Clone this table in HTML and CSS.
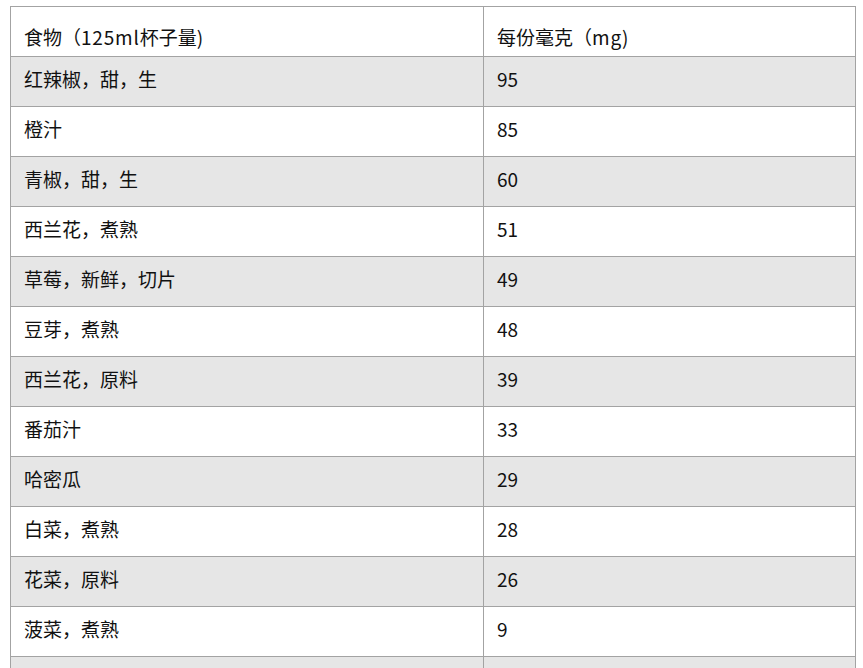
FILE: index.html
```html
<!DOCTYPE html>
<html lang="zh">
<head>
<meta charset="utf-8">
<link rel="stylesheet" href="styles.css">
</head>
<body>
<table class="vc-table">
  <colgroup><col class="c1"><col class="c2"></colgroup>
  <tr class="head"><td>食物（<span class="lat">125ml</span>杯子量)</td><td>每份毫克（<span class="lat">mg</span>)</td></tr>
  <tr class="alt"><td>红辣椒，甜，生</td><td>95</td></tr>
  <tr><td>橙汁</td><td>85</td></tr>
  <tr class="alt"><td>青椒，甜，生</td><td>60</td></tr>
  <tr><td>西兰花，煮熟</td><td>51</td></tr>
  <tr class="alt"><td>草莓，新鲜，切片</td><td>49</td></tr>
  <tr><td>豆芽，煮熟</td><td>48</td></tr>
  <tr class="alt"><td>西兰花，原料</td><td>39</td></tr>
  <tr><td>番茄汁</td><td>33</td></tr>
  <tr class="alt"><td>哈密瓜</td><td>29</td></tr>
  <tr><td>白菜，煮熟</td><td>28</td></tr>
  <tr class="alt"><td>花菜，原料</td><td>26</td></tr>
  <tr><td>菠菜，煮熟</td><td>9</td></tr>
  <tr class="alt"><td>&nbsp;</td><td>&nbsp;</td></tr>
</table>
</body>
</html>
```
FILE: styles.css
```css
html, body {
  margin: 0;
  padding: 0;
  background: #fff;
}
body {
  padding: 6px 0 0 10px;
}
.vc-table {
  border-collapse: collapse;
  width: 846px;
  table-layout: fixed;
  font-family: "Noto Sans CJK SC", "Noto Sans", sans-serif;
  font-size: 19px;
  color: #111;
}
.c1 { width: 473px; }
.vc-table td {
  border: 1px solid #a3a3a3;
  height: 49px;
  box-sizing: border-box;
  padding: 0 13px 5px 13px;
  line-height: 24px;
  vertical-align: middle;
  white-space: nowrap;
}
.vc-table tr { height: 50px; }
.vc-table tr.head td {
  padding: 11px 13px 0 13px;
}
.vc-table .lat {
  letter-spacing: 0.8px;
}
.vc-table tr.alt td {
  background: #e6e6e6;
}
```
